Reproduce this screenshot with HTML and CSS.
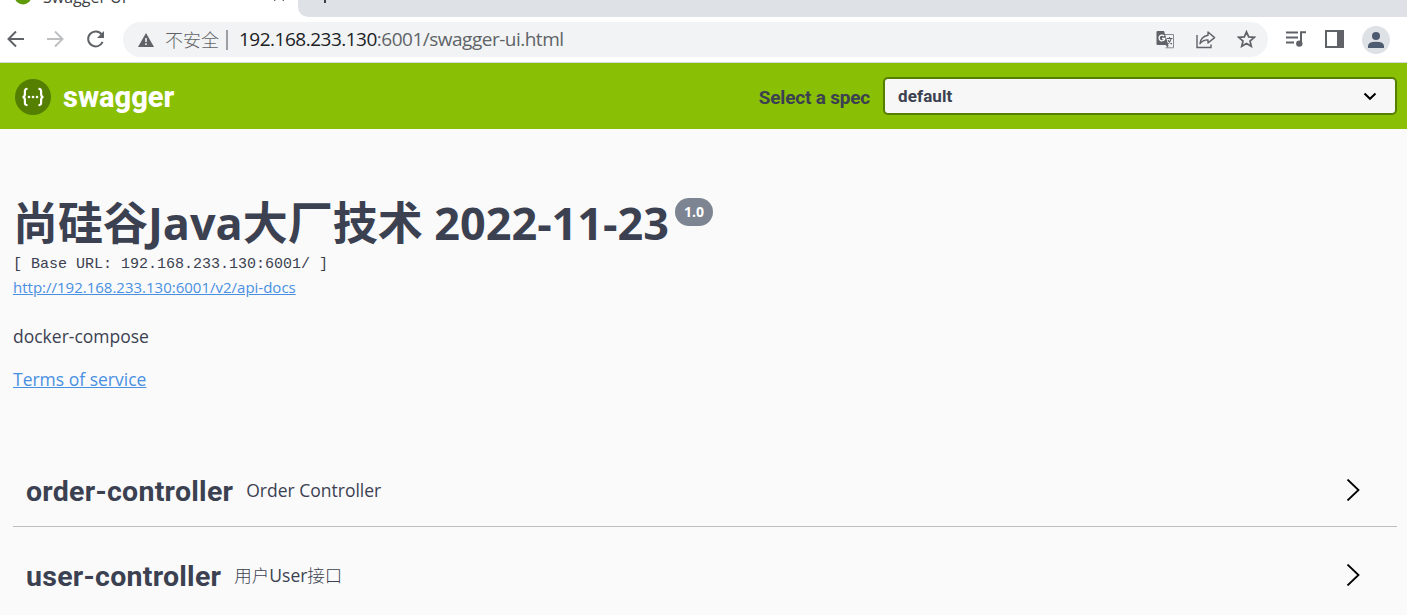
FILE: index.html
```html
<!DOCTYPE html>
<html lang="zh-CN">
<head>
<meta charset="utf-8">
<title>Swagger UI</title>
<link rel="stylesheet" href="styles.css">
</head>
<body>
<div class="tabstrip">
  <div class="tab">
    <svg class="favicon" width="18" height="18" viewBox="0 0 18 18"><circle cx="9" cy="9" r="8.5" fill="#5f9a08"/><path d="M6 5v8M12 5v8" stroke="#fff" stroke-width="2"/></svg>
    <span class="tab-title">Swagger UI</span>
    <svg class="tab-close" width="10" height="10" viewBox="0 0 10 10"><path d="M0 0L10 10M10 0L0 10" stroke="#5f6368" stroke-width="1.2"/></svg>
  </div>
  <div class="strip-rest"><svg width="14" height="14" viewBox="0 0 14 14"><path d="M7 0V14M0 7H14" stroke="#3c4043" stroke-width="2"/></svg></div>
</div>
<div class="toolbar">
  <svg class="nav back" width="18" height="18" viewBox="0 0 18 18"><path d="M17 9H2M9 1.5L1.5 9L9 16.500" fill="none" stroke="#5f6368" stroke-width="2"/></svg>
  <svg class="nav fwd" width="18" height="18" viewBox="0 0 18 18"><path d="M1 9H16M9 1.500L16.500 9L9 16.500" fill="none" stroke="#bdbfc1" stroke-width="2"/></svg>
  <svg class="nav reload" width="19" height="19" viewBox="0 0 19 19"><path d="M15.800 4.600A7.500 7.500 0 1 0 16.600 11.800" fill="none" stroke="#5f6368" stroke-width="2"/><path d="M18 1V8H11Z" fill="#5f6368"/></svg>
  <div class="omnibox">
    <svg class="warn" width="16" height="14" viewBox="0 0 16 14"><path d="M8 0L16 14H0Z" fill="#5f6368"/><path d="M8 5V9M8 10.300V12" stroke="#f1f3f4" stroke-width="1.600"/></svg>
    <span class="insecure">不安全</span>
    <span class="divider"></span>
    <span class="url">192.168.233.130<span class="path">:6001/swagger-ui.html</span></span>
    <span class="box-icons">
      <svg width="19" height="19" viewBox="0 0 19 19"><path d="M8 4.500H17.500V17.800H9.500" fill="none" stroke="#888b8e"/><path d="M1.500 1H8L12.300 15H1.500Q.5 15 .5 14V2Q.5 1 1.500 1Z" fill="#5f6368"/><path d="M8.200 6.100A2.900 2.900 0 1 0 8.800 8.500H6" fill="none" stroke="#fff" stroke-width="1.300"/><path d="M9.500 15.200L12 17.800L12.500 15Z" fill="#5f6368"/><path d="M10.500 8.500H16.500M13.500 7V8.500M15.200 8.500Q14.500 12 11.500 14M12 10Q13 12.500 16 14" fill="none" stroke="#5f6368" stroke-width="1.100"/></svg>
      <svg width="20" height="19" viewBox="0 0 20 19"><path d="M1 5V17.500H15V14.500" fill="none" stroke="#5f6368" stroke-width="1.400"/><path d="M12 2L18.600 7.600L12 13V9.900Q7 9.700 4 13.700Q4.800 6.500 12 5.300Z" fill="none" stroke="#5f6368" stroke-width="1.400" stroke-linejoin="round"/></svg>
      <svg width="19" height="18" viewBox="0 0 19 18"><path d="M9.500 1.800L11.700 6.900L17.300 7.300L13 11L14.300 16.300L9.500 13.400L4.700 16.300L6 11L1.700 7.300L7.300 6.900Z" fill="none" stroke="#5f6368" stroke-width="1.700"/></svg>
    </span>
  </div>
  <svg class="music" width="20" height="16" viewBox="0 0 20 16"><path d="M0 1.500H12M0 6.500H12M0 11.500H8M15 12V1.200H20" fill="none" stroke="#5f6368" stroke-width="2"/><circle cx="13.300" cy="12.600" r="3.200" fill="#5f6368"/></svg>
  <svg class="panel" width="19" height="18" viewBox="0 0 19 18"><path d="M1 1H18V17H1Z" fill="#fff" stroke="#5f6368" stroke-width="2"/><path d="M12 0H19V18H12Z" fill="#5f6368"/></svg>
  <svg class="avatar" width="28" height="28" viewBox="0 0 28 28"><circle cx="14" cy="14" r="14" fill="#dee1e6"/><circle cx="14" cy="10" r="4" fill="#4d5b70"/><path d="M6 22V20Q6 15.700 14 15.700T22 20V22Z" fill="#4d5b70"/></svg>
</div>
<header class="topbar">
  <svg class="logo" width="36" height="36" viewBox="0 0 36 36"><circle cx="18" cy="18" r="18" fill="#547f00"/><path d="M12.500 10Q9.700 9.700 9.900 12.500V15Q9.900 18 7.500 18Q9.900 18 9.900 21V23.500Q9.700 26.300 12.500 26M23.500 10Q26.300 9.700 26.100 12.500V15Q26.100 18 28.500 18Q26.100 18 26.100 21V23.500Q26.300 26.300 23.500 26" fill="none" stroke="#fff" stroke-width="2.2"/><circle cx="14" cy="18" r="1.300" fill="#fff"/><circle cx="18" cy="18" r="1.300" fill="#fff"/><circle cx="22" cy="18" r="1.300" fill="#fff"/></svg>
  <span class="brand">swagger</span>
  <span class="spec-label">Select a spec</span>
  <div class="select"><span>default</span><svg width="14" height="9" viewBox="0 0 14 9"><path d="M1.500 1.500L7 6.800L12.500 1.500" fill="none" stroke="#000" stroke-width="2"/></svg></div>
</header>
<main class="content">
  <section class="info">
    <div class="title-row"><h1 class="title">尚硅谷Java大厂技术 2022-11-23</h1><span class="version">1.0</span></div>
    <div class="base-url">[ Base URL: 192.168.233.130:6001/ ]</div>
    <a class="docs-link">http://192.168.233.130:6001/v2/api-docs</a>
    <p class="description">docker-compose</p>
    <a class="terms">Terms of service</a>
  </section>
  <section class="tags">
    <div class="tag"><h2 class="tag-name">order-controller</h2><span class="tag-desc">Order Controller</span><svg width="14" height="22" viewBox="0 0 14 22"><path d="M1.500 .5L12.500 11L1.500 21.500" fill="none" stroke="#000" stroke-width="1.800"/></svg></div>
    <div class="tag"><h2 class="tag-name">user-controller</h2><span class="tag-desc"><span class="light">用户</span>User<span class="light">接口</span></span><svg width="14" height="22" viewBox="0 0 14 22"><path d="M1.500 .5L12.500 11L1.500 21.500" fill="none" stroke="#000" stroke-width="1.800"/></svg></div>
  </section>
</main>
</body>
</html>
```
FILE: styles.css
```css
* { box-sizing: border-box; }
body { margin: 0; height: 615px; overflow: hidden; background: #fafafa; color: #3b4151; font-family: "Open Sans", "Noto Sans CJK SC", sans-serif; }
svg { display: block; flex: none; }
span, h1, h2, a { white-space: nowrap; }
.tabstrip { display: flex; height: 17px; overflow: hidden; background: #fff; }
.tab { display: flex; width: 298px; height: 17px; align-items: flex-start; }
.favicon { margin: -13px 0 0 14px; }
.tab-title { margin: -14px 0 0 11px; font-size: 16px; line-height: 22px; color: #3c4043; }
.tab-close { margin: -9px 14px 0 auto; }
.strip-rest { flex: 1; height: 17px; padding-left: 20px; background: #dee1e6; border-bottom-left-radius: 10px; }
.strip-rest svg { margin-top: -11px; }
.toolbar { display: flex; align-items: center; height: 46px; background: #fff; border-bottom: 1px solid #d5d8dc; }
.back { margin-left: 7px; }
.fwd { margin-left: 21px; }
.nav { margin-top: -1px; }
.reload { margin-left: 22px; }
.omnibox { display: flex; align-items: center; width: 1145px; height: 35px; margin-left: 18px; padding-left: 15px; border-radius: 18px; background: #f1f3f4; font-size: 18px; }
.insecure { margin-left: 11px; margin-top: -2px; color: #5f6368; font-family: "Noto Sans CJK SC", sans-serif; font-weight: 300; line-height: 26px; }
.divider { width: 2px; height: 20px; margin: 0 11px 0 7px; background: #9c9fa3; }
.url { margin-top: -2px; color: #202124; font-size: 19px; letter-spacing: -.5px; }
.path { color: #5f6368; }
.box-icons { display: flex; align-items: center; gap: 21px; margin: 0 12px 0 auto; }
.box-icons svg { margin-top: -1px; }
.music { margin-left: 18px; margin-top: -1px; }
.panel { margin-left: 19px; margin-top: -1px; }
.avatar { margin-left: 18px; }
.topbar { display: flex; align-items: center; height: 66px; padding: 2px 10px 0 15px; background: #89bf04; }
.brand, .spec-label, .select, .tag-name { font-family: Roboto, sans-serif; font-weight: 700; }
.brand { margin-left: 12px; color: #fff; font-size: 29px; line-height: 34px; font-weight: 800; }
.spec-label { margin-left: auto; margin-right: 13px; font-size: 19px; letter-spacing: -.2px; }
.select { display: flex; align-items: center; justify-content: space-between; width: 514px; height: 38px; margin-top: -2px; padding: 0 18px 0 13px; border: 2px solid #547f00; border-radius: 5px; background: #f7f7f7; font-size: 17px; letter-spacing: .1px; }
.content { padding: 66px 10px 0 13px; }
.title-row { display: flex; align-items: flex-start; height: 57px; }
.title { margin: 0; font-size: 45px; line-height: 56px; font-weight: 700; letter-spacing: -.02px; }
.version { width: 38px; height: 28px; margin: 3px 0 0 6px; border-radius: 14px; background: #7d8492; color: #fff; font-size: 14px; font-weight: 700; line-height: 28px; text-align: center; }
.base-url { height: 22px; padding-top: 2px; font-family: "Liberation Mono", monospace; font-size: 15px; line-height: 21px; }
.docs-link { display: block; color: #4990e2; font-size: 15px; line-height: 26px; text-decoration: underline; }
.description { margin: 23px 0 0; font-size: 17.5px; line-height: 26px; }
.terms { display: block; margin-top: 17px; color: #4990e2; font-size: 17.5px; line-height: 26px; text-decoration: underline; }
.tags { margin-top: 62px; }
.tag { display: flex; align-items: center; height: 73px; margin-bottom: 12px; padding: 0 37px 0 13px; border-bottom: 1px solid #bcbdc1; }
.tag:last-child { border-bottom-color: transparent; }
.tag-name { margin: 3px 13px 0 0; font-size: 28.5px; line-height: 36px; letter-spacing: .27px; }
.tag-desc { font-size: 17.5px; line-height: 26px; }
.light { font-weight: 300; font-family: "Noto Sans CJK SC", sans-serif; }
.tag svg { margin-left: auto; margin-top: -1px; }
```
